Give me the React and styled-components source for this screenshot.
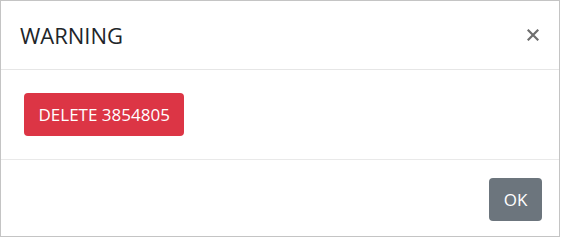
import React from 'react';
import styled, { createGlobalStyle } from 'styled-components';

const GlobalStyle = createGlobalStyle`
  html, body {
    margin: 0;
    padding: 0;
    background: #fff;
  }
  body {
    font-family: 'Open Sans', 'Noto Sans', sans-serif;
    color: #212529;
  }
`;

const Modal = styled.div`
  box-sizing: border-box;
  width: 560px;
  height: 237px;
  border: 1px solid #c4c4c4;
  display: flex;
  flex-direction: column;
  background: #fff;
`;

const Header = styled.div`
  height: 68px;
  padding: 0 20px 0 19px;
  display: flex;
  align-items: center;
  justify-content: space-between;
  border-bottom: 1px solid #e6e6e6;
`;

const Title = styled.h5`
  margin: 0;
  font-size: 22px;
  font-weight: 400;
  line-height: 1;
  color: #212529;
`;

const Close = styled.button`
  border: 0;
  background: none;
  padding: 0;
  width: 12px;
  height: 12px;
  display: flex;
  cursor: pointer;
  color: #6e6e6e;
`;

const Body = styled.div`
  height: 90px;
  box-sizing: border-box;
  padding: 23px 23px;
  border-bottom: 1px solid #e9e9e9;
`;

const Footer = styled.div`
  flex: 1;
  display: flex;
  justify-content: flex-end;
  align-items: flex-start;
  padding: 18px 17px 0;
`;

const Button = styled.button`
  box-sizing: border-box;
  height: 43px;
  padding: 0 14.5px;
  border: 0;
  border-radius: 4px;
  font-family: 'Open Sans', 'Noto Sans', sans-serif;
  font-size: 17px;
  line-height: 1;
  color: #fff;
  background: ${(p) => p.$bg};
  cursor: pointer;
`;

export default function App() {
  return (
    <>
      <GlobalStyle />
      <Modal>
        <Header>
          <Title>WARNING</Title>
          <Close aria-label="Close">
            <svg width="12" height="12" viewBox="0 0 12 12">
              <path d="M1.5 1.5 L10.5 10.5 M10.5 1.5 L1.5 10.5" stroke="currentColor" strokeWidth="2.2" strokeLinecap="square" />
            </svg>
          </Close>
        </Header>
        <Body>
          <Button $bg="#dc3545">DELETE 3854805</Button>
        </Body>
        <Footer>
          <Button $bg="#6c757d">OK</Button>
        </Footer>
      </Modal>
    </>
  );
}
